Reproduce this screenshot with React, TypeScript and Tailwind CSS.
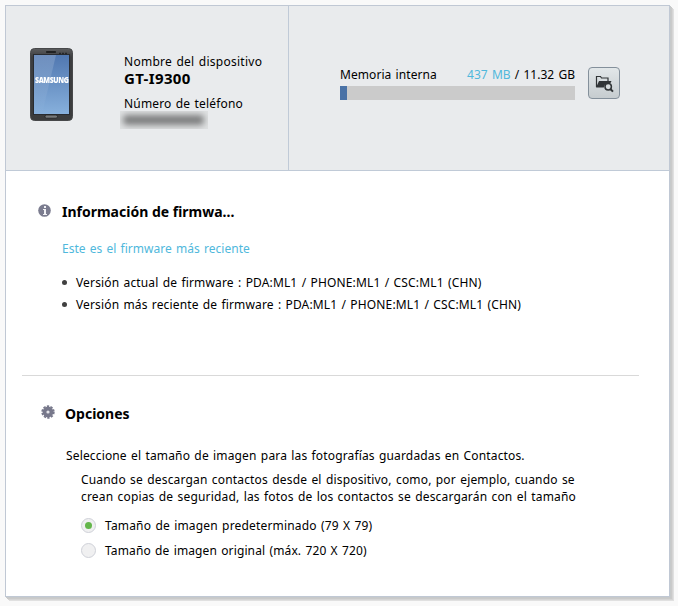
import React, { useState } from "react";

const firmwareVersions = [
  { text: "Versión actual de firmware : PDA:ML1 / PHONE:ML1 / CSC:ML1 (CHN)", spacing: "tracking-[0.15px]" },
  { text: "Versión más reciente de firmware : PDA:ML1 / PHONE:ML1 / CSC:ML1 (CHN)", spacing: "tracking-[0.14px]" },
];

const imageSizes = [
  { id: "default", label: "Tamaño de imagen predeterminado (79 X 79)", spacing: "tracking-[0.17px]" },
  { id: "original", label: "Tamaño de imagen original (máx. 720 X 720)", spacing: "tracking-[0.12px]" },
];

function PhoneIcon() {
  return (
    <div className="relative h-[73px] w-[43px] shrink-0">
      <svg width="43" height="73" viewBox="0 0 43 73">
        <defs>
          <linearGradient id="body" x1="0" y1="0" x2="0" y2="1">
            <stop offset="0" stopColor="#5c5d5f" />
            <stop offset="0.12" stopColor="#3c3d3f" />
            <stop offset="1" stopColor="#3b3c3d" />
          </linearGradient>
          <linearGradient id="screen" x1="0" y1="0" x2="0" y2="1">
            <stop offset="0" stopColor="#5077b0" />
            <stop offset="1" stopColor="#87b0dc" />
          </linearGradient>
          <linearGradient id="shine" x1="0" y1="0" x2="0" y2="1">
            <stop offset="0" stopColor="#fff" stopOpacity="0.18" />
            <stop offset="1" stopColor="#fff" stopOpacity="0" />
          </linearGradient>
        </defs>
        <rect x="0.5" y="0.5" width="42" height="72" rx="4" fill="url(#body)" stroke="#47484a" />
        <rect x="3.5" y="6.5" width="36" height="60" fill="none" stroke="#292c31" />
        <rect x="4" y="7" width="35" height="59" fill="url(#screen)" />
        <path d="M4 7h22L12 66H4z" fill="url(#shine)" />
        <rect x="16" y="3" width="10" height="2" rx="0.8" fill="#202122" />
        <path d="M29 5.500h2M32 5.500h2M35 5.500h2" stroke="#252628" strokeWidth="1.4" />
        <rect x="15" y="67" width="12.5" height="3.2" rx="1.5" fill="#77797b" stroke="#202122" strokeWidth="0.8" />
      </svg>
      <span className="absolute top-[28px] left-[5px] w-[33px] origin-center scale-y-120 text-center font-['Open_Sans'] text-[7px] leading-[10px] font-extrabold tracking-[-0.4px] text-white">
        SAMSUNG
      </span>
    </div>
  );
}

function FolderSearchIcon() {
  return (
    <svg className="mt-[2px] ml-[1px]" width="20" height="19" viewBox="0 0 20 19" fill="none">
      <path d="M1.500 12V1.500h4l1 1.500H13v3" stroke="#303436" strokeWidth="1.2" />
      <path d="M1 12.500 4 6h12.500l-1 2h-2.500L10 9.500l-1.200 3z" fill="#303436" />
      <circle cx="13.200" cy="11.800" r="3.200" fill="#d5dadc" stroke="#303436" strokeWidth="1.5" />
      <path d="m15.600 14.200 2.400 2.400" stroke="#303436" strokeWidth="2" />
    </svg>
  );
}

function InfoIcon() {
  return (
    <svg className="mt-[1px] shrink-0" width="13" height="13" viewBox="0 0 13 13">
      <circle cx="6.5" cy="6.5" r="6.3" fill="#7b7c8f" />
      <path d="M6 2h2v2H6zM5 5h3v5h1v1H5v-1h1V6H5z" fill="#f1f1f5" />
    </svg>
  );
}

function GearIcon() {
  return (
    <svg className="shrink-0" width="14" height="14" viewBox="0 0 14 14">
      <circle cx="7" cy="7" r="5.4" fill="#77788b" />
      <circle cx="7" cy="7" r="5.8" fill="none" stroke="#77788b" strokeWidth="1.8" strokeDasharray="2.3 1.344" />
      <circle cx="7" cy="7" r="1.6" fill="#e4e4ea" />
    </svg>
  );
}

function DeviceHeader() {
  return (
    <header className="flex h-[165px] border-b border-[#c0cad7] bg-[#e9ebed]">
      <div className="flex w-[283px] border-r border-[#c0cad7] pl-6">
        <div className="mt-[42px]">
          <PhoneIcon />
        </div>
        <div className="ml-[51px] pt-[48px]">
          <p className="w-[142px] leading-4 tracking-[0.26px]">Nombre del dispositivo</p>
          <p className="-mt-[1px] text-[15px] leading-[18px] font-bold tracking-[0.35px]">GT-I9300</p>
          <p className="mt-[9px] leading-4 tracking-[0.17px]">Número de teléfono</p>
          <div className="-mt-[1px] -ml-[4px] h-[18px] w-[88px] overflow-hidden bg-[#dfe1e2] pt-[4px] pl-[3px]">
            <div className="h-[10px] w-[81px] rounded-sm bg-[#7c7d7e] blur-[3px]" />
          </div>
        </div>
      </div>
      <div className="flex pt-[61px] pl-[51px]">
        <div className="w-[235px]">
          <div className="flex justify-between leading-4 whitespace-nowrap">
            <span className="tracking-[0.07px]">Memoria interna</span>
            <span className="tracking-[0.03px]">
              <span className="text-[#4fb8dc]">437 MB</span> / 11.32 GB
            </span>
          </div>
          <div className="mt-[3px] h-[14px] bg-[#cbcbcb]">
            <div className="h-full w-[3%] bg-[#4a72a6]" />
          </div>
        </div>
        <button className="ml-[13px] flex size-8 items-center justify-center rounded-[4px] border border-[#84909b] bg-linear-to-b from-[#e2e7e9] to-[#c6cccf]">
          <FolderSearchIcon />
        </button>
      </div>
    </header>
  );
}

export default function App() {
  const [selected, setSelected] = useState("default");

  return (
    <div className="h-[606px] w-[678px] overflow-hidden bg-[#f9f9f9] pt-[5px] pl-[5px] font-['Noto_Sans','Open_Sans',sans-serif] text-[12px] text-black [word-spacing:1px]">
      <main className="h-[592px] w-[665px] border border-[#c0c8d4] bg-white shadow-[1px_1px_0_#c6c9ca,2px_2px_0_#cacaca,3px_3px_0_#d5d5d5,4px_4px_0_#e0e0e0]">
        <DeviceHeader />

        <section className="h-[204px] pt-[32px] pl-[32px]">
          <div className="flex">
            <InfoIcon />
            <h2 className="ml-[11px] text-[14px] leading-[18px] font-bold [word-spacing:0]">Información de firmwa...</h2>
          </div>
          <div className="pl-[24px]">
            <p className="mt-[20px] leading-4 tracking-[0.03px] text-[#4fb8dc]">Este es el firmware más reciente</p>
            <ul className="mt-[18px]">
              {firmwareVersions.map((version) => (
                <li key={version.text} className="flex h-[22px] leading-4">
                  <span className="mt-[5px] mr-[9px] size-[5px] rounded-full bg-[#404040]" />
                  <span className={version.spacing}>{version.text}</span>
                </li>
              ))}
            </ul>
          </div>
        </section>

        <hr className="mr-[30px] ml-[16px] border-[#d9d9d9]" />

        <section className="pt-[29px] pl-[35px]">
          <div className="flex">
            <GearIcon />
            <h2 className="ml-[10px] text-[14px] leading-[18px] font-bold">Opciones</h2>
          </div>
          <div className="pl-[25px] tracking-[0.15px]">
            <p className="mt-[25px] leading-4">Seleccione el tamaño de imagen para las fotografías guardadas en Contactos.</p>
            <p className="mt-[7px] pl-[15px] leading-[17px] tracking-[0.17px] whitespace-nowrap">
              Cuando se descargan contactos desde el dispositivo, como, por ejemplo, cuando se
              <br />
              crean copias de seguridad, las fotos de los contactos se descargarán con el tamaño
            </p>
            <div className="mt-[13px] pl-[15px]">
              {imageSizes.map((size) => (
                <label key={size.id} className="flex h-[25px] leading-4" onClick={() => setSelected(size.id)}>
                  <span className="mr-[9px] flex size-[15px] items-center justify-center rounded-full border border-[#cfd1d8] bg-[#f0f0f1]">
                    {selected === size.id && <span className="size-[7px] rounded-full bg-[#64b64b]" />}
                  </span>
                  <span className={size.spacing}>{size.label}</span>
                </label>
              ))}
            </div>
          </div>
        </section>
      </main>
    </div>
  );
}
